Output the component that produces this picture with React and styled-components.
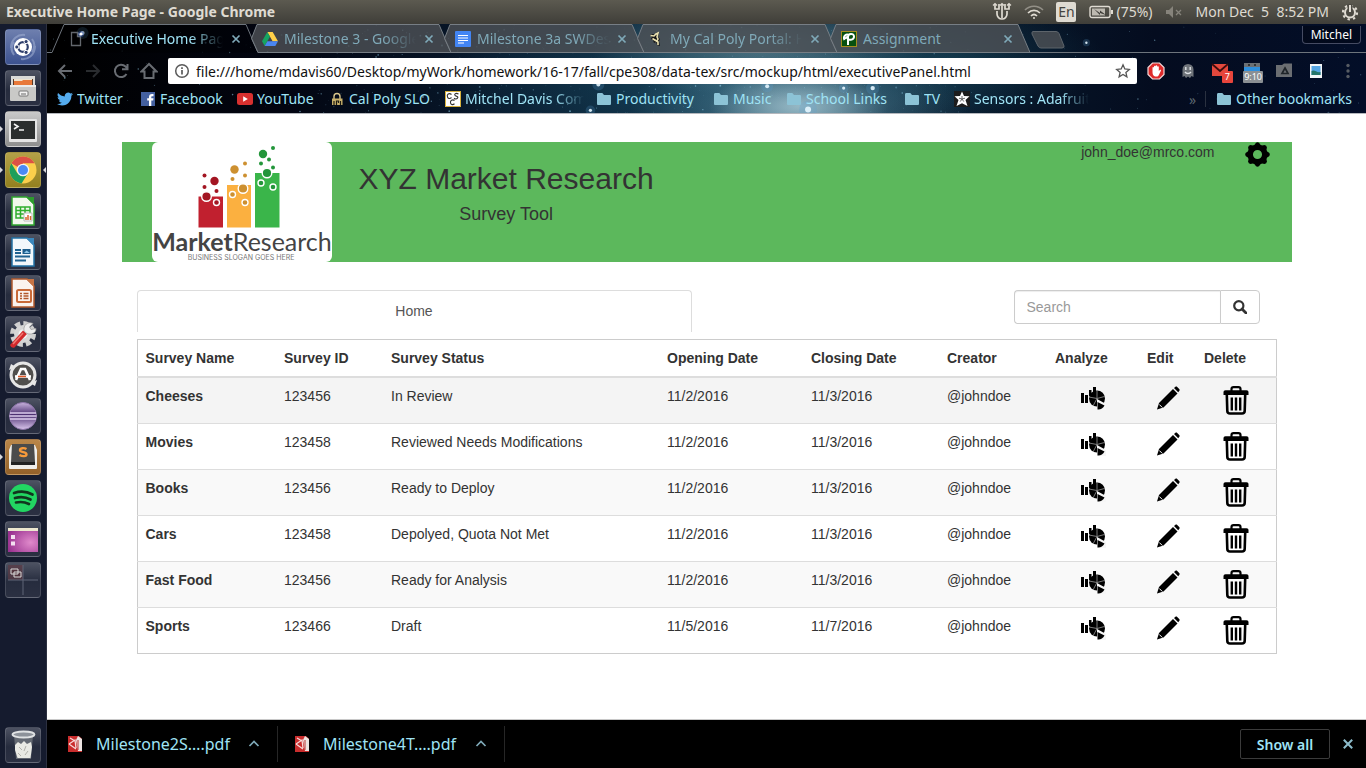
import React from "react";
import styled, { createGlobalStyle, css } from "styled-components";

const UI_FONT = '"Noto Sans", "Open Sans", sans-serif';
const PAGE_FONT = '"Liberation Sans", Arial, sans-serif';

const GlobalStyle = createGlobalStyle`
  * { box-sizing: border-box; }
  body { margin: 0; background: #fff; }
  button { font: inherit; color: inherit; background: none; border: 0; padding: 0; margin: 0; cursor: pointer; }
  a { color: inherit; text-decoration: none; }
  svg { display: block; flex: none; }
`;

/* ---------- shell ---------- */

const Desktop = styled.div`
  min-height: 100vh;
  display: flex;
  flex-direction: column;
  font-family: ${UI_FONT};
`;

const MenuBar = styled.header`
  display: flex;
  align-items: center;
  justify-content: space-between;
  height: 24px;
  padding: 0 7px 0 6px;
  background: linear-gradient(#5c5a50, #3f3e39);
  color: #dfdbd2;
  font-size: 14px;
  white-space: nowrap;
`;

const WindowTitle = styled.h1`
  margin: 0;
  font-size: 14px;
  line-height: 24px;
  font-weight: 700;
`;

const Indicators = styled.div`
  display: flex;
  align-items: center;
`;

const Indicator = styled.div`
  display: flex;
  align-items: center;
  gap: 3px;
  margin-left: ${(p) => p.$gap || 12}px;
  line-height: 24px;
`;

const LangBadge = styled.span`
  width: 20px;
  height: 20px;
  line-height: 20px;
  text-align: center;
  border-radius: 2px;
  background: #dfdbd2;
  color: #45443f;
`;

const Workspace = styled.div`
  flex: 1;
  display: flex;
`;

const Launcher = styled.nav`
  flex: none;
  width: 47px;
  display: flex;
  flex-direction: column;
  gap: 5px;
  padding: 5px;
  background: #151b2e;
  border-right: 1px solid #2c3040;
`;

const tileTones = {
  dash: "linear-gradient(#6e7fae, #3c5290)",
  grey: "linear-gradient(#c9c9c9, #8e8e8e)",
  gold: "linear-gradient(#b3a048, #93801f)",
  brown: "linear-gradient(#b98649, #93612a)",
  dark: "linear-gradient(#4d5262, #262c3e 55%, #2b3042)",
};

const LauncherTile = styled.button`
  position: relative;
  width: 36px;
  height: 36px;
  border-radius: 4px;
  border: 1px solid rgba(255, 255, 255, 0.14);
  background: ${(p) => tileTones[p.$tone || "dark"]};
  display: flex;
  align-items: center;
  justify-content: center;
  ${(p) => p.$last && css`margin-top: auto;`}
`;

const RunningMark = styled.span`
  position: absolute;
  top: 14px;
  ${(p) => (p.$side === "right" ? "right: -6px" : "left: -6px")};
  border: 3px solid transparent;
  ${(p) => (p.$side === "right" ? "border-right-color" : "border-left-color")}: #d8d8dc;
`;

const Browser = styled.div`
  flex: 1;
  min-width: 0;
  display: flex;
  flex-direction: column;
`;

/* ---------- browser chrome ---------- */

const ChromeTop = styled.div`
  position: relative;
  overflow: hidden;
  border-bottom: 1px solid #b5b8bd;
  color: #9fe3f5;
  font-size: 14px;
  white-space: nowrap;
  background:
    radial-gradient(ellipse 90px 34px at 57% 92%, rgba(175, 205, 215, 0.75), transparent),
    radial-gradient(ellipse 170px 60px at 57% 95%, rgba(100, 150, 170, 0.7), transparent),
    radial-gradient(ellipse 170px 50px at 54% 25%, rgba(105, 140, 150, 0.65), transparent),
    radial-gradient(ellipse 300px 100px at 52% 60%, rgba(30, 85, 110, 0.7), transparent),
    radial-gradient(ellipse 160px 60px at 68% 40%, rgba(22, 62, 80, 0.7), transparent),
    linear-gradient(90deg, #000 0%, #020511 18%, #08192c 34%, #0a2438 52%, #07182a 70%, #040c1f 84%, #030e28 100%);
`;

const StarField = styled.svg`
  position: absolute;
  inset: 0;
  width: 100%;
  height: 100%;
`;

const TabStrip = styled.div`
  position: relative;
  display: flex;
  height: 29px;
`;

const StripEdge = styled.div`
  width: 5px;
  border-bottom: 1px solid #6d747c;
`;

const StripRest = styled.div`
  flex: 1;
  display: flex;
  justify-content: space-between;
  align-items: flex-start;
  padding: 2px 5px 0 0;
  margin-left: 13px;
  border-bottom: 1px solid #6d747c;
`;

const Tab = styled.div`
  position: relative;
  flex: none;
  width: 206px;
  height: 29px;
  margin-right: -13px;
  display: flex;
  align-items: center;
  padding: 1px 17px 0 17px;
  color: ${(p) => (p.$active ? "#9fe3f5" : "#7fa9b8")};
`;

const TabShape = styled.svg`
  position: absolute;
  left: 0;
  top: 0;
`;

const TabLabel = styled.button`
  position: relative;
  flex: 1;
  min-width: 0;
  display: flex;
  align-items: center;
  gap: 6px;
  line-height: 24px;
`;

const FadeText = styled.span`
  flex: 1;
  overflow: hidden;
  text-align: left;
  ${(p) => p.$fade && css`mask-image: linear-gradient(90deg, #000 75%, transparent);`}
`;

const TabClose = styled.button`
  position: relative;
  margin-left: 8px;
`;

const ProfileButton = styled.button`
  position: relative;
  padding: 0 8px;
  height: 18px;
  line-height: 17px;
  font-size: 12px;
  color: #fff;
  border: 1px solid #454b62;
  border-top: 0;
  border-radius: 0 0 4px 4px;
  background: rgba(0, 0, 0, 0.25);
`;

const Toolbar = styled.div`
  position: relative;
  display: flex;
  align-items: center;
  padding: 5px 9px 2px 9px;
  gap: 10px;
`;

const NavButtons = styled.div`
  display: flex;
  gap: 10px;
`;

const NavButton = styled.button`
  width: 18px;
  height: 18px;
  opacity: ${(p) => (p.$dim ? 0.4 : 1)};
`;

const Omnibox = styled.div`
  flex: 1;
  min-width: 0;
  height: 26px;
  display: flex;
  align-items: center;
  gap: 6px;
  padding: 0 6px;
  border-radius: 2px;
  background: #fff;
`;

const UrlInput = styled.input`
  flex: 1;
  min-width: 0;
  height: 24px;
  border: 0;
  padding: 0;
  outline: 0;
  background: transparent;
  color: #111;
  font-family: ${UI_FONT};
  font-size: 14px;
`;

const Extensions = styled.div`
  display: flex;
  gap: 14px;
`;

const ExtButton = styled.button`
  position: relative;
  width: 18px;
  height: 18px;
`;

const ExtBadge = styled.span`
  position: absolute;
  top: 9px;
  right: ${(p) => (p.$wide ? -2 : -4)}px;
  padding: 0 ${(p) => (p.$wide ? 1 : 3)}px;
  height: 12px;
  font-size: 9px;
  line-height: 12px;
  color: #fff;
  border-radius: 1px;
  background: ${(p) => (p.$wide ? "#8b9094" : "#e8453c")};
`;

const BookmarkBar = styled.nav`
  position: relative;
  display: flex;
  align-items: center;
  height: 27px;
  padding: 0 14px 1px 10px;
`;

const Bookmark = styled.a`
  display: flex;
  align-items: center;
  gap: 4px;
  flex: 0 1 ${(p) => (p.$w ? `${p.$w}px` : "auto")};
  min-width: 0;
  padding-right: ${(p) => (p.$w ? 12 : 0)}px;
  line-height: 24px;
`;

const BookmarkOverflow = styled.button`
  margin-left: auto;
  padding-right: 9px;
  color: #5d6770;
`;

const BookmarkDivider = styled.span`
  height: 16px;
  border-left: 1px solid #2a3140;
  margin-right: 10px;
`;

/* ---------- page ---------- */

const PageView = styled.main`
  flex: 1;
  background: #fff;
  padding: 28px 16px;
  font-family: ${PAGE_FONT};
  font-size: 14px;
  line-height: 20px;
  color: #333;
`;

const Container = styled.div`
  max-width: 1170px;
  margin: 0 auto;
`;

const Banner = styled.header`
  display: flex;
  align-items: flex-start;
  min-height: 120px;
  padding: 0 22px 0 30px;
  background: #5cb85c;
`;

const Headline = styled.div`
  margin-left: 27px;
  padding-top: 20px;
  text-align: center;
`;

const CompanyName = styled.h2`
  margin: 0;
  font-size: 30px;
  line-height: 33px;
  font-weight: 400;
`;

const ToolName = styled.h3`
  margin: 9px 0 0;
  font-size: 18px;
  line-height: 20px;
  font-weight: 400;
`;

const Account = styled.div`
  margin-left: auto;
  display: flex;
  gap: 30px;
`;

const Controls = styled.div`
  display: flex;
  justify-content: space-between;
  align-items: flex-start;
  margin: 28px 32px 7px 15px;
`;

const HomeTab = styled.a`
  flex: 0 1 555px;
  height: 42px;
  padding-top: 10px;
  text-align: center;
  color: #555;
  border: 1px solid #ddd;
  border-bottom: 0;
  border-radius: 4px 4px 0 0;
`;

const SearchForm = styled.form`
  display: flex;
  height: 34px;
`;

const SearchInput = styled.input`
  width: 206px;
  padding: 6px 12px;
  font: 14px/20px ${PAGE_FONT};
  border: 1px solid #ccc;
  border-right: 0;
  border-radius: 4px 0 0 4px;
  box-shadow: inset 0 1px 1px rgba(0, 0, 0, 0.075);
  &::placeholder { color: #999; opacity: 1; }
`;

const SearchButton = styled.button`
  width: 40px;
  display: flex;
  align-items: center;
  justify-content: center;
  border: 1px solid #ccc;
  border-radius: 0 4px 4px 0;
`;

const TableWrap = styled.div`
  margin: 0 16px 0 15px;
`;

const SurveyTable = styled.table`
  width: 100%;
  table-layout: fixed;
  border-collapse: collapse;
  border: 1px solid #ccc;
`;

const Col = styled.col`
  width: ${(p) => p.$w}px;
`;

const HeadCell = styled.th`
  padding: 8px;
  text-align: left;
  border-bottom: 2px solid #ddd;
`;

const Row = styled.tr`
  background: ${(p) => (p.$hover ? "#f4f4f4" : p.$odd ? "#f9f9f9" : "#fff")};
`;

const Cell = styled.td`
  height: 46px;
  padding: 8px;
  text-align: left;
  vertical-align: top;
  border-top: 1px solid #ddd;
`;

const ActionCell = styled(Cell)`
  text-align: center;
  line-height: 0;
`;

const ActionButton = styled.button`
  display: inline-block;
`;

/* ---------- downloads ---------- */

const DownloadBar = styled.footer`
  display: flex;
  align-items: center;
  height: 49px;
  padding-right: 12px;
  border-top: 1px solid #c8c8c8;
  background: #000;
  color: #9fe3f5;
  font-size: 16px;
`;

const Download = styled.div`
  display: flex;
  align-items: center;
  height: 36px;
  padding: 0 17px 0 20px;
  border-right: 1px solid #262626;
  & + & { padding-left: 16px; }
`;

const DownloadName = styled.button`
  display: flex;
  align-items: center;
  gap: 12px;
  width: 164px;
  white-space: nowrap;
`;

const DownloadMenu = styled.button`
  margin-left: 17px;
`;

const ShowAll = styled.button`
  margin-left: auto;
  margin-right: 12px;
  width: 90px;
  height: 30px;
  font-size: 14px;
  font-weight: 600;
  border: 1px solid #3b3b3b;
  border-radius: 2px;
`;

/* ---------- drawings ---------- */

const CloseGlyph = ({ size = 10, color = "#7fa9b8" }) => (
  <svg width={size} height={size} viewBox="0 0 10 10">
    <path d="M1.500 1.500l7 7M8.500 1.500l-7 7" stroke={color} strokeWidth="1.700" />
  </svg>
);

function makeStars(count) {
  let seed = 41;
  const next = () => {
    seed = (seed * 16807) % 2147483647;
    return seed / 2147483647;
  };
  return Array.from({ length: count }, () => {
    const spread = next();
    const x = spread < 0.65 ? 20 + next() * 50 : next() * 100;
    return { x, y: next() * 100, r: 0.3 + next() * next() * 0.8, o: 0.2 + next() * 0.5 };
  });
}
const STARS = makeStars(520);
const BRIGHT = [[2.7, 10, 2], [41.2, 97, 1.6], [41.8, 68, 2], [60.4, 72, 1.6], [78.8, 21, 1.2], [57.7, 96, 3], [62.6, 72, 2.2], [54.600, 70, 2]];

const Stars = () => (
  <StarField aria-hidden="true">
    {STARS.map((s, i) => (
      <circle key={i} cx={`${s.x}%`} cy={`${s.y}%`} r={s.r} fill="#8ec9e4" opacity={s.o} />
    ))}
    {BRIGHT.map(([x, y, r], i) => (
      <g key={i}>
        <circle cx={`${x}%`} cy={`${y}%`} r={r * 3} fill="#5aa0d0" opacity=".22" />
        <circle cx={`${x}%`} cy={`${y}%`} r={r} fill="#e6f6ff" opacity=".9" />
      </g>
    ))}
  </StarField>
);

const favicons = {
  page: (
    <svg width="16" height="16" viewBox="0 0 16 16">
      <path d="M2.500 1.500h6l3 3.500v9.500h-9z M8.500 1.500v4h3" fill="none" stroke="#63676d" strokeWidth="1.300" />
      <circle cx="12" cy="3" r="3" fill="#3f74e8" opacity=".35" />
      <circle cx="12" cy="3" r="1.600" fill="#fff" />
    </svg>
  ),
  drive: (
    <svg width="16" height="16" viewBox="0 0 16 16">
      <path d="M5.300 1h5.400L16 10.200h-5.400z" fill="#ffcf48" />
      <path d="M5.300 1L8 5.600 2.700 15 0 10.200z" fill="#16a362" />
      <path d="M5.400 10.200H16L13.300 15H2.700z" fill="#4a86f0" />
    </svg>
  ),
  docs: (
    <svg width="16" height="16" viewBox="0 0 16 16">
      <rect width="16" height="16" rx="1" fill="#4285f4" />
      <path d="M3 4.500h10M3 7h10M3 9.500h10M3 12h6" stroke="#fff" strokeWidth="1.200" />
    </svg>
  ),
  mustang: (
    <svg width="16" height="16" viewBox="0 0 16 16">
      <path d="M2 4l3-1 2 1 2-3 2 2-1 3 2 2-1 2 1 5-3-1-1-3-2 1-1-3-2-1 1-2z" fill="#141414" />
      <path d="M2.500 4.500l3.500 .5 2-2 2-1-1 4 1 2-1 2M7 9l3 2 0 3M4.500 7.500l3 2" stroke="#e8dfae" strokeWidth="1.600" fill="none" />
    </svg>
  ),
  polylearn: (
    <svg width="16" height="16" viewBox="0 0 16 16">
      <rect x=".5" y=".5" width="15" height="15" fill="#07500f" stroke="#a58c1d" />
      <path d="M3.500 9C1.500 5 6 2 8 4.500M7 14V6c0-4 6-4 6-.5S8.500 9.500 7 8M4.500 8c.5-2 2-2.500 3-2" fill="none" stroke="#fff" strokeWidth="2" />
    </svg>
  ),
  twitter: (
    <svg width="16" height="16" viewBox="0 0 24 24">
      <path fill="#55acee" d="M23.950 4.570a10 10 0 0 1-2.820.775 4.960 4.960 0 0 0 2.160-2.720c-.95.555-2.005.96-3.130 1.185a4.920 4.920 0 0 0-8.380 4.480C7.690 8.090 4.070 6.130 1.640 3.160a4.900 4.900 0 0 0 1.520 6.570 4.900 4.900 0 0 1-2.230-.61v.06a4.920 4.920 0 0 0 3.950 4.830 5 5 0 0 1-2.210.085 4.940 4.940 0 0 0 4.600 3.420A9.870 9.870 0 0 1 0 19.540a13.990 13.990 0 0 0 7.550 2.210c9.050 0 14-7.500 14-13.980 0-.21 0-.42-.015-.63a9.940 9.940 0 0 0 2.460-2.550z" />
    </svg>
  ),
  facebook: (
    <svg width="16" height="16" viewBox="0 0 16 16">
      <rect x="1" y="1" width="14" height="14" fill="#4460a0" />
      <path d="M9 15V9.500H7.200V7.300H9V6c0-2 1-3 3-3h1.500v2.200h-1.200c-.8 0-1 .4-1 1v1.100h2.200l-.3 2.200h-1.900V15z" fill="#fff" />
    </svg>
  ),
  youtube: (
    <svg width="16" height="16" viewBox="0 0 16 16">
      <rect x="0" y="2" width="16" height="12" rx="2.500" fill="#d8302f" />
      <path d="M6.200 5.300l4.600 2.700-4.600 2.700z" fill="#fff" />
    </svg>
  ),
  lock: (
    <svg width="16" height="16" viewBox="0 0 16 16">
      <path d="M5 8V5.500a3 3 0 0 1 6 0V8" fill="none" stroke="#d9c68c" strokeWidth="1.400" />
      <path d="M3 7.500h10.500V14H3z" fill="#c8b06a" />
      <path d="M5 14v-4M7.500 14v-4h2v2M11.500 10v4" fill="none" stroke="#1d1a10" strokeWidth="1.200" />
    </svg>
  ),
  csc: (
    <svg width="16" height="16" viewBox="0 0 16 16">
      <rect x=".5" y=".5" width="15" height="15" fill="#fff" stroke="#d9b23c" />
      <path d="M6.500 3.500C4 1.500 1.500 3.500 2.500 6S5.500 7.500 6.500 6.500M13.500 3c-3-1.500-5 .5-3 1.700s3 1.300 2 2.500-2.500.8-3.500 0M9.500 9.500c-2-1.500-4.500 0-4 2.300s2.500 2.200 4 1" fill="none" stroke="#333" strokeWidth="1.100" />
    </svg>
  ),
  folder: (
    <svg width="16" height="16" viewBox="0 0 16 16">
      <path d="M1 3.500C1 2.700 1.500 2 2.300 2h4l1.700 2h5.700c.8 0 1.300.5 1.300 1.300v7.400c0 .8-.5 1.300-1.300 1.300H2.300C1.500 14 1 13.500 1 12.700z" fill="#8cc3d6" />
    </svg>
  ),
  adafruit: (
    <svg width="16" height="16" viewBox="0 0 16 16">
      <rect width="16" height="16" fill="#1c1c1c" />
      <path d="M8 .5l2 4.500 5.500.2-4 3.800 2 6L8 12.200 2.500 15l2-6-4-3.800L6 5z" fill="#fff" />
      <path d="M8 8V5M8 8l3-.8M8 8l1.800 2.600M8 8l-1.800 2.600M8 8l-3-.8" stroke="#444" strokeWidth=".8" />
    </svg>
  ),
};

const launcherArt = {
  dash: (
    <svg width="34" height="34" viewBox="0 0 34 34">
      <path d="M5 18C5 9 12 4 19 5M29 16c0 9-7 14-14 13M8 25c-3-4-3-9 0-13M26 9c3 4 3 9 0 13" stroke="#a4b2d6" strokeWidth="2" fill="none" opacity=".55" />
      <circle cx="17" cy="17" r="9" fill="#fff" />
      <circle cx="17" cy="17" r="4.800" fill="none" stroke="#2f3f6c" strokeWidth="2.200" />
      <g fill="#2f3f6c" stroke="#fff" strokeWidth="1">
        <circle cx="10.800" cy="17" r="2.100" /><circle cx="20.100" cy="11.600" r="2.100" /><circle cx="20.100" cy="22.400" r="2.100" />
      </g>
    </svg>
  ),
  files: (
    <svg width="34" height="34" viewBox="0 0 34 34">
      <path d="M5 5h24v12H5z" fill="#d9d9d7" /><path d="M7 8h20v7H7z" fill="#5b3a26" />
      <path d="M8 8h18v2H8z" fill="#efe3cf" /><path d="M8 10h8l1-1h9v6H8z" fill="#e8793a" />
      <rect x="4" y="14" width="26" height="16" rx="1" fill="#c9c9c7" /><path d="M4 14h26v2H4z" fill="#ececea" />
      <rect x="13" y="20" width="9" height="5" rx="1" fill="#f2f2f2" stroke="#777" /><path d="M15 23h5" stroke="#666" />
    </svg>
  ),
  terminal: (
    <svg width="34" height="34" viewBox="0 0 34 34">
      <rect x="3" y="7" width="28" height="23" rx="1" fill="#e4e4e4" /><rect x="5" y="9" width="24" height="18" fill="#2b2e2e" />
      <path d="M8 12l4 2.500L8 17M13 18h5" stroke="#f2f2f2" strokeWidth="1.600" fill="none" />
    </svg>
  ),
  chrome: (
    <svg width="34" height="34" viewBox="0 0 34 34">
      <circle cx="17" cy="17" r="13.500" fill="#fbcf4b" />
      <path d="M17 17L5.300 10.250A13.500 13.500 0 0 1 28.700 10.250H17z" fill="#dd5145" />
      <path d="M5.300 10.250A13.500 13.500 0 0 0 15.500 30.400L21.500 21 11.500 20.500z" fill="#1d9f5c" />
      <circle cx="17" cy="17" r="6.300" fill="#f3f3f3" /><circle cx="17" cy="17" r="5" fill="#4a8af4" />
    </svg>
  ),
  calc: (
    <svg width="34" height="34" viewBox="0 0 34 34">
      <path d="M6 3h15l7 7v21H6z" fill="#f2f8ee" stroke="#2fa52f" strokeWidth="1.500" /><path d="M20 3h8v8z" fill="#2d9c2d" />
      <path d="M10 13h14v11H10z M10 16.500h14M10 20h14M14.500 13v11M19 13v11" fill="none" stroke="#2fae2f" strokeWidth="1.500" />
      <path d="M18 19h8v8h-8z" fill="#fff" stroke="#bbb" /><path d="M20 26v-3M22 26v-5M24.500 26v-4" stroke="#d8602a" strokeWidth="1.500" />
    </svg>
  ),
  writer: (
    <svg width="34" height="34" viewBox="0 0 34 34">
      <path d="M6 3h15l7 7v21H6z" fill="#f2f7fb" stroke="#2272a5" strokeWidth="1.500" /><path d="M20 3h8v8z" fill="#3b87bd" />
      <path d="M9 15h6M9 18h6M9 21.500h15M9 25.500h11" stroke="#1f6290" strokeWidth="2" /><path d="M16.500 14h8v5h-8z" fill="#1d5d8c" /><path d="M18 18l2.500-2.500L24 18z" fill="#8cc5e8" />
    </svg>
  ),
  impress: (
    <svg width="34" height="34" viewBox="0 0 34 34">
      <path d="M6 3h15l7 7v21H6z" fill="#fbf3ee" stroke="#b2592c" strokeWidth="1.500" /><path d="M20 3h8v8z" fill="#c77445" />
      <rect x="11" y="14" width="14" height="12" rx="1.500" fill="none" stroke="#c96a38" strokeWidth="2" />
      <path d="M14 17.500h2M14 20h2M14 22.500h2M17.500 17.500h5M17.500 20h5M17.500 22.500h5" stroke="#b2592c" strokeWidth="1.300" />
    </svg>
  ),
  settings: (
    <svg width="34" height="34" viewBox="0 0 34 34">
      <circle cx="17" cy="17" r="10.500" fill="none" stroke="#cfcfcf" strokeWidth="5" strokeDasharray="5.200 3.050" />
      <circle cx="17" cy="17" r="9" fill="#d6d6d6" /><circle cx="17" cy="17" r="4.500" fill="#f3f3f3" />
      <path d="M4 28q1 3.500 4.500 2.500L21 17l-4-3.500z" fill="#d2292c" /><path d="M7 27l10-11" stroke="#f07a72" strokeWidth="1.500" />
      <path d="M18 14c-1-6 4-10 9-7.500l-3.500 3.500 1.500 2.500 5-1c0 5-5 6.500-9 5z" fill="#ededed" stroke="#999" strokeWidth=".7" />
    </svg>
  ),
  updater: (
    <svg width="34" height="34" viewBox="0 0 34 34">
      <circle cx="17" cy="17" r="12" fill="#504f4d" stroke="#e6e6e6" strokeWidth="3" />
      <path d="M3 12l2-6 5 3zM31 22l-2 6-5-3z" fill="#e6e6e6" />
      <path d="M10 22l5-11h4l5 11" stroke="#fff" strokeWidth="2.600" fill="none" /><path d="M9 18.500h16" stroke="#fff" strokeWidth="2.600" /><path d="M12 18.500h8" stroke="#e05b2a" strokeWidth="1.500" />
    </svg>
  ),
  eclipse: (
    <svg width="34" height="34" viewBox="0 0 34 34">
      <defs><linearGradient id="ecl" x1="0" y1="0" x2="0" y2="1"><stop offset="0" stopColor="#c9b4de" /><stop offset=".45" stopColor="#4b2f70" /><stop offset="1" stopColor="#d9c6ec" /></linearGradient></defs>
      <circle cx="17" cy="17" r="13.500" fill="url(#ecl)" stroke="#8d75a9" />
      <path d="M4 14h26M3.500 17h27M4 20h26" stroke="#dccced" strokeWidth="1.300" />
    </svg>
  ),
  sublime: (
    <svg width="34" height="34" viewBox="0 0 34 34">
      <path d="M3 10l2-5h24l2 5v18q0 1-1 1H4q-1 0-1-1z" fill="#f0eeea" /><path d="M6 4h22l1 18H5z" fill="#4b4b4b" /><path d="M5 22h24v3H5z" fill="#222" />
      <path d="M20.500 9c-2.500-1.500-6.500-1-6.500 1.200s6.500 1.600 6.500 4-4 2.500-7 .8" stroke="#f79a3b" strokeWidth="2.400" fill="none" />
    </svg>
  ),
  spotify: (
    <svg width="34" height="34" viewBox="0 0 34 34">
      <circle cx="17" cy="17" r="14" fill="#22d662" />
      <path d="M8 12c6-2 13-1.500 18.500 1.500M9 17c5-1.500 11-1 15.500 1.500M10 21.500c4.500-1 9-.5 13 1.500" stroke="#12361f" strokeWidth="2.700" fill="none" strokeLinecap="round" />
    </svg>
  ),
  workspace: (
    <svg width="34" height="34" viewBox="0 0 34 34">
      <defs><radialGradient id="wsp" cx=".75" cy=".6" r=".8"><stop offset="0" stopColor="#e08acb" /><stop offset="1" stopColor="#98308f" /></radialGradient></defs>
      <rect x="2" y="6" width="30" height="24" fill="url(#wsp)" /><path d="M2 6h30v3H2z" fill="#ece7cf" />
      <path d="M5 13h4v4H5zM5 19.500h4v4H5z" fill="#f3dff0" />
    </svg>
  ),
  switcher: (
    <svg width="34" height="34" viewBox="0 0 34 34">
      <path d="M2 2h15v15H2z" fill="#5d3a45" opacity=".7" /><path d="M17 2v30M2 17h30" stroke="#5f6576" />
      <path d="M5 6h7v5H5zM8 9h7v5H8z" fill="#53343e" stroke="#dadada" />
    </svg>
  ),
  trash: (
    <svg width="34" height="34" viewBox="0 0 34 34">
      <path d="M8 7h19l-2 24H10z" fill="#70757d" opacity=".8" />
      <path d="M9 17l3-3 3 2 3-3 3 3 4-2 1 5-1.500 11h-13L9 22z" fill="#e9e9e4" />
      <path d="M13 19l3 3M20 18l-2 5M22 23l-3 4M12 25l3 3" stroke="#b1b1ab" />
      <ellipse cx="17.500" cy="6.500" rx="11" ry="3" fill="#8d929a" stroke="#e0e2e4" strokeWidth="1.800" />
    </svg>
  ),
};

const LAUNCHER = [
  ["dash", "Dash", "dash"],
  ["files", "Files"],
  ["terminal", "Terminal", "grey", "left"],
  ["chrome", "Google Chrome", "gold", "both"],
  ["calc", "LibreOffice Calc"],
  ["writer", "LibreOffice Writer"],
  ["impress", "LibreOffice Impress"],
  ["settings", "System Settings"],
  ["updater", "Software Updater"],
  ["eclipse", "Eclipse"],
  ["sublime", "Sublime Text", "brown", "left"],
  ["spotify", "Spotify"],
  ["workspace", "Desktop"],
  ["switcher", "Workspace Switcher"],
  ["trash", "Trash"],
];

const TABS = [
  ["page", "Executive Home Page"],
  ["drive", "Milestone 3 - Google Drive"],
  ["docs", "Milestone 3a SWDesign"],
  ["mustang", "My Cal Poly Portal: Home"],
  ["polylearn", "Assignment"],
];

const BOOKMARKS = [
  ["twitter", "Twitter", 83],
  ["facebook", "Facebook", 97],
  ["youtube", "YouTube", 92],
  ["lock", "Cal Poly SLO", 116],
  ["csc", "Mitchel Davis Computer", 151, true],
  ["folder", "Productivity", 117],
  ["folder", "Music", 73],
  ["folder", "School Links", 118],
  ["folder", "TV", 50],
  ["adafruit", "Sensors : Adafruit Industries", 147, true],
];

const navGlyphs = [
  ["Back", <path d="M16 9H3M9 3L3 9l6 6" />],
  ["Forward", <path d="M2 9h13M9 3l6 6-6 6" />, true],
  ["Reload", <path d="M14.500 12A6.200 6.200 0 1 1 13.500 4.500L15 6M15.500 2v5.200H10" />],
  ["Home page", <path d="M1.500 9.500L9 2l7.500 7.500H13.500v6.500h-9V9.500z" />],
];

const extGlyphs = [
  ["AdBlock", (
    <svg width="18" height="18" viewBox="0 0 18 18">
      <path d="M5.500 1h7L17 5.500v7L12.500 17h-7L1 12.500v-7z" fill="#df2b2b" stroke="#f4dada" strokeWidth="1.200" />
      <path d="M5.500 9V5.500a.8.8 0 0 1 1.500 0V4.500a.8.8 0 0 1 1.600 0V4a.8.800 0 0 1 1.600 0v1a.8.8 0 0 1 1.600 0v4l1-1c.8-.5 1.500.2 1 1l-2 4c-.5 1-1 1.500-2.500 1.500-2.800 0-3.800-1.500-3.800-5z" fill="#fff" />
    </svg>
  )],
  ["Ghostery", (
    <svg width="18" height="18" viewBox="0 0 18 18">
      <path d="M3.500 15V7.500a5.500 5.500 0 0 1 11 0V15l-2-1-1.500 2-2-1.500L7 16l-1.500-2z" fill="#6f747a" />
      <path d="M6.800 5v3M11.200 5v3M6 10c1.500 2 4.500 2 6 0" stroke="#dfe3e6" strokeWidth="1.400" fill="none" />
    </svg>
  )],
  ["Mail", (
    <svg width="18" height="18" viewBox="0 0 18 18">
      <rect x="1" y="2" width="16" height="12" fill="#e2483d" /><path d="M1 2l8 7 8-7" stroke="#3a0b0b" strokeWidth="1.700" fill="none" />
    </svg>
  ), "7"],
  ["Clock", (
    <svg width="18" height="18" viewBox="0 0 18 18">
      <path d="M1 1h16v4H1z" fill="#6b7075" /><path d="M5 3h2M11 3h2" stroke="#222" strokeWidth="1.500" /><path d="M1 5h16v5H1z" fill="#2f8fdc" />
    </svg>
  ), "9:10"],
  ["Save to Drive", (
    <svg width="18" height="18" viewBox="0 0 18 18">
      <path d="M1 3h6l2-1.500h8V15H1z" fill="#6b6e72" /><path d="M10 6l3 5.500H7z" fill="none" stroke="#1f2429" strokeWidth="1.700" />
    </svg>
  )],
  ["Photos", (
    <svg width="18" height="18" viewBox="0 0 18 18">
      <rect x="3" y="2" width="12" height="14" fill="#f4f6f7" /><rect x="4.500" y="4" width="9" height="9" fill="#56a6e4" /><path d="M4.500 9c3-2 5 2 9 1v3h-9z" fill="#26766a" />
    </svg>
  )],
  ["Menu", (
    <svg width="18" height="18" viewBox="0 0 18 18">
      <g fill="#575c63"><circle cx="9" cy="3.500" r="1.700" /><circle cx="9" cy="9" r="1.700" /><circle cx="9" cy="14.500" r="1.700" /></g>
    </svg>
  )],
];

const SURVEYS = [
  ["Cheeses", "123456", "In Review", "11/2/2016", "11/3/2016"],
  ["Movies", "123458", "Reviewed Needs Modifications", "11/2/2016", "11/3/2016"],
  ["Books", "123456", "Ready to Deploy", "11/2/2016", "11/3/2016"],
  ["Cars", "123458", "Depolyed, Quota Not Met", "11/2/2016", "11/3/2016"],
  ["Fast Food", "123456", "Ready for Analysis", "11/2/2016", "11/3/2016"],
  ["Sports", "123466", "Draft", "11/5/2016", "11/7/2016"],
];
const COLUMNS = [
  ["Survey Name", 139], ["Survey ID", 107], ["Survey Status", 276], ["Opening Date", 144], ["Closing Date", 136],
  ["Creator", 108], ["Analyze", 92], ["Edit", 57], ["Delete", 80],
];

const AnalyzeIcon = () => (
  <svg width="26" height="25" viewBox="0 0 26 25">
    <path d="M1 7h3v10H1zM5 9h3v8H5zM9 4h2.500v6H9zM13 1h3v5h-3z" />
    <circle cx="17" cy="12.500" r="8" />
    <path d="M17 12.500V4.500M17 12.500L24.500 10.500M17 12.500l-8-1.500M17 12.500l-4 7.500" stroke="#999" strokeWidth=".8" />
    <path d="M17 13l9 5v6h-9z" fill="#f6f6f6" />
    <path d="M17.500 16l7 3.500c-1.500 3-4 4.300-7 4z" />
  </svg>
);

const PencilIcon = () => (
  <svg width="24" height="25" viewBox="0 0 24 25">
    <path d="M1 23.500l2-6.500L17 3l4.500 4.500-14 14z" />
    <path d="M18 2l1.200-1c.8-.6 1.500-.5 2 0l2 2c.6.600.6 1.400 0 2l-1 1.200z" />
    <path d="M3.300 18.500l3 3" stroke="#fff" strokeWidth="1" />
  </svg>
);

const TrashIcon = () => (
  <svg width="26" height="29" viewBox="0 0 26 29" fill="none" stroke="#000">
    <path d="M8.500 5V3C8.500 1.500 9.200 1.200 10.500 1.200h5c1.300 0 2 .3 2 1.800V5" strokeWidth="2.200" />
    <path d="M.5 9V6.500C.5 5 1.200 4.300 2.500 4.300h21c1.300 0 2 .7 2 2.200V9z" fill="#000" stroke="none" />
    <path d="M3.800 8.500l.5 16.500c.1 1.800.9 2.500 2.700 2.500h12c1.800 0 2.600-.7 2.700-2.500l.5-16.500" strokeWidth="2.600" />
    <path d="M8.800 11.500v13M13 11.500v13M17.200 11.500v13" strokeWidth="2.400" />
  </svg>
);

const GearIcon = () => (
  <svg width="25" height="25" viewBox="0 0 25 25">
    <circle cx="12.500" cy="12.500" r="7.300" fill="none" stroke="#000" strokeWidth="5.500" />
    {[0, 45, 90, 135, 180, 225, 270, 315].map((a) => (
      <path key={a} d="M8.700 4L10.800.900Q12.500-.500 14.200.900L16.300 4z" transform={`rotate(${a} 12.500 12.500)`} />
    ))}
  </svg>
);

const Bubbles = ({ color, dots }) =>
  dots.map(([x, y, r, ring], i) => (
    <circle key={i} cx={x} cy={y} r={r} fill={color} stroke={ring ? "#fff" : "none"} strokeWidth="1.400" />
  ));

const Logo = () => (
  <svg width="180" height="120" viewBox="0 0 180 120" role="img" aria-label="MarketResearch">
    <rect width="180" height="120" rx="6" fill="#fff" />
    <path d="M46.500 54.500h24.500v31H46.500z" fill="#c1202f" />
    <path d="M75 43h24v42.500H75z" fill="#fbb040" />
    <path d="M103 31h24.500v54.500H103z" fill="#3ab54a" />
    <Bubbles color="#a31522" dots={[[52.500, 33.500, 2], [62.500, 39, 4.200], [52.500, 45, 2], [64.500, 49, 2], [54.500, 54.500, 4.800, 1], [64.500, 60.500, 3, 1]]} />
    <Bubbles color="#cd9030" dots={[[93, 21.500, 2], [82.500, 27.500, 4.200], [93, 33.500, 2], [80.500, 37, 2], [91, 46.500, 4.800, 1], [80.500, 52.500, 3, 1], [93, 60.500, 3, 1]]} />
    <Bubbles color="#23963a" dots={[[121, 6, 2], [111, 12, 4.200], [117, 17.500, 2], [109, 21.500, 2], [121, 25.500, 2], [115, 31, 4.800, 1], [109, 41, 3, 1], [121, 45, 3, 1]]} />
    <text x="90" y="109" textAnchor="middle" fontFamily="Lato, sans-serif" fontSize="25" fill="#444">
      <tspan fontWeight="700">Market</tspan><tspan>Research</tspan>
    </text>
    <text x="89" y="118" textAnchor="middle" fontFamily="Inter, sans-serif" fontSize="7" fill="#777">BUSINESS SLOGAN GOES HERE</text>
  </svg>
);

const PdfIcon = () => (
  <svg width="17" height="18" viewBox="0 0 17 18">
    <path d="M1 1h11l3 3v13H1z" fill="#c92d2d" /><path d="M2 9l6-4 1 8M2 9l7 5M3 3l5 3" stroke="#f6dada" strokeWidth="1.300" fill="none" />
    <path d="M9 5l2-4 4 3v12h-4z" fill="#ece4e2" /><path d="M11 5v10" stroke="#b33" />
  </svg>
);

const Chevron = () => (
  <svg width="12" height="12" viewBox="0 0 12 12"><path d="M1.500 8L6 3.500 10.500 8" stroke="#7fa9b8" strokeWidth="1.700" fill="none" /></svg>
);

/* ---------- sections ---------- */

const SystemBar = () => (
  <MenuBar>
    <WindowTitle>Executive Home Page - Google Chrome</WindowTitle>
    <Indicators>
      <Indicator>
        <svg width="20" height="20" viewBox="0 0 20 20" fill="none" stroke="#dfdbd2" strokeWidth="1.700">
          <path d="M10 2v14M5 9v3a5 5 0 0 0 10 0V9M3 2v5h4V2M13 2v5h4V2" /><path d="M1 3.500l2-2 2 2M8 3.500l2-2 2 2M15 3.500l2-2 2 2" strokeWidth="1.200" />
        </svg>
      </Indicator>
      <Indicator>
        <svg width="20" height="16" viewBox="0 0 20 16" fill="none" stroke="#dfdbd2" strokeWidth="1.700">
          <path d="M1 6c5-5 13-5 18 0" opacity=".45" /><path d="M4 9c3.500-3.500 8.500-3.500 12 0M7 12c2-2 4-2 6 0" /><circle cx="10" cy="14" r="1" fill="#dfdbd2" stroke="none" />
        </svg>
      </Indicator>
      <Indicator><LangBadge>En</LangBadge></Indicator>
      <Indicator $gap={13}>
        <svg width="24" height="14" viewBox="0 0 24 14">
          <rect x="1" y="1.500" width="20" height="11" rx="2" fill="none" stroke="#dfdbd2" strokeWidth="1.400" /><path d="M22 5h2v4h-2z" fill="#dfdbd2" />
          <path d="M3 3.500h13v7H3z" fill="#bdb9b0" /><path d="M5 4l6 4V5.500l6 4.500-6-2v2z" fill="#3f3e39" />
        </svg>
        (75%)
      </Indicator>
      <Indicator>
        <svg width="18" height="14" viewBox="0 0 18 14"><path d="M1 5h3l4-4v12L4 9H1z" fill="#86837b" /><path d="M11 5l5 5M16 5l-5 5" stroke="#86837b" strokeWidth="1.300" /></svg>
      </Indicator>
      <Indicator $gap={13}>Mon Dec&nbsp; 5&nbsp; 8:52 PM</Indicator>
      <Indicator>
        <svg width="18" height="18" viewBox="0 0 18 18" fill="none" stroke="#dfdbd2">
          <circle cx="9" cy="9.500" r="5" strokeWidth="2" /><circle cx="9" cy="9.500" r="7" strokeWidth="2.200" strokeDasharray="2.400 3.100" />
          <path d="M9 1v9" stroke="#4d4b44" strokeWidth="5" /><path d="M9 2v7" strokeWidth="2" />
        </svg>
      </Indicator>
    </Indicators>
  </MenuBar>
);

const Sidebar = () => (
  <Launcher aria-label="Launcher">
    {LAUNCHER.map(([id, label, tone, mark], i) => (
      <LauncherTile key={id} aria-label={label} $tone={tone} $last={i === LAUNCHER.length - 1}>
        {launcherArt[id]}
        {mark && <RunningMark $side="left" />}
        {mark === "both" && <RunningMark $side="right" />}
      </LauncherTile>
    ))}
  </Launcher>
);

const BrowserChrome = () => (
  <ChromeTop>
    <Stars />
    <TabStrip>
      <StripEdge />
      {TABS.map(([icon, title], i) => (
        <Tab key={title} $active={i === 0}>
          <TabShape width="206" height="29" viewBox="0 0 206 29">
            {i === 0 ? (
              <path d="M0 28.500L12 .5H194L206 28.500" fill="rgba(0,0,0,.3)" stroke="#6d747c" />
            ) : (
              <path d="M6.500 14.500L12 .5H194L206 28.500H13z" fill="rgba(77,81,86,.82)" stroke="#777e85" />
            )}
          </TabShape>
          <TabLabel>
            {favicons[icon]}
            <FadeText $fade={title !== "Assignment"}>{title}</FadeText>
          </TabLabel>
          <TabClose aria-label={`Close ${title}`}><CloseGlyph /></TabClose>
        </Tab>
      ))}
      <StripRest>
        <button aria-label="New tab">
          <svg width="36" height="26" viewBox="0 0 36 26"><path d="M3 5.500h23q2 0 3 2L34 20q.5 2-2 2H11q-2 0-3-2L2 8q-.5-2.500 1-2.500z" fill="rgba(77,81,86,.82)" stroke="#5d646b" /></svg>
        </button>
        <ProfileButton>Mitchel</ProfileButton>
      </StripRest>
    </TabStrip>
    <Toolbar>
      <NavButtons>
        {navGlyphs.map(([label, shape, dim]) => (
          <NavButton key={label} aria-label={label} $dim={dim}>
            <svg width="18" height="18" viewBox="0 0 18 18" fill="none" stroke="#686c72" strokeWidth="2">{shape}</svg>
          </NavButton>
        ))}
      </NavButtons>
      <Omnibox>
        <svg width="16" height="16" viewBox="0 0 16 16" fill="none" stroke="#5a5a5a" strokeWidth="1.500">
          <circle cx="8" cy="8" r="6.300" /><path d="M8 7v4.500M8 4.300v1.600" strokeWidth="1.700" />
        </svg>
        <UrlInput
          aria-label="Address"
          defaultValue="file:///home/mdavis60/Desktop/myWork/homework/16-17/fall/cpe308/data-tex/src/mockup/html/executivePanel.html"
        />
        <button aria-label="Bookmark this page">
          <svg width="16" height="16" viewBox="0 0 16 16"><path d="M8 1.800l1.800 4.200 4.500.4-3.400 3 1 4.400L8 11.500l-3.900 2.300 1-4.400-3.400-3 4.500-.4z" fill="none" stroke="#555" strokeWidth="1.300" /></svg>
        </button>
      </Omnibox>
      <Extensions>
        {extGlyphs.map(([label, art, badge]) => (
          <ExtButton key={label} aria-label={label}>
            {art}
            {badge && <ExtBadge $wide={badge.length > 1}>{badge}</ExtBadge>}
          </ExtButton>
        ))}
      </Extensions>
    </Toolbar>
    <BookmarkBar aria-label="Bookmarks">
      {BOOKMARKS.map(([icon, label, w, fade]) => (
        <Bookmark key={label} href="#" $w={w}>
          {favicons[icon]}
          <FadeText $fade={fade}>{label}</FadeText>
        </Bookmark>
      ))}
      <BookmarkOverflow aria-label="More bookmarks">»</BookmarkOverflow>
      <BookmarkDivider />
      <Bookmark href="#">{favicons.folder}<span>Other bookmarks</span></Bookmark>
    </BookmarkBar>
  </ChromeTop>
);

const SurveyPage = () => (
  <PageView>
    <Container>
      <Banner>
        <Logo />
        <Headline>
          <CompanyName>XYZ Market Research</CompanyName>
          <ToolName>Survey Tool</ToolName>
        </Headline>
        <Account>
          <span>john_doe@mrco.com</span>
          <button aria-label="Settings"><GearIcon /></button>
        </Account>
      </Banner>
      <Controls>
        <HomeTab href="#">Home</HomeTab>
        <SearchForm role="search">
          <SearchInput type="text" placeholder="Search" aria-label="Search" />
          <SearchButton type="button" aria-label="Search">
            <svg width="14" height="14" viewBox="0 0 14 14" fill="none" stroke="#333"><circle cx="5.800" cy="5.800" r="4.600" strokeWidth="2.200" /><path d="M9 9l4 4" strokeWidth="2.800" strokeLinecap="round" /></svg>
          </SearchButton>
        </SearchForm>
      </Controls>
      <TableWrap>
        <SurveyTable>
          <colgroup>{COLUMNS.map(([name, w]) => <Col key={name} $w={w} />)}</colgroup>
          <thead>
            <tr>{COLUMNS.map(([name]) => <HeadCell key={name} scope="col">{name}</HeadCell>)}</tr>
          </thead>
          <tbody>
            {SURVEYS.map(([name, id, status, open, close], i) => (
              <Row key={name} $hover={i === 0} $odd={i % 2 === 0}>
                <Cell as="th" scope="row">{name}</Cell>
                <Cell>{id}</Cell>
                <Cell>{status}</Cell>
                <Cell>{open}</Cell>
                <Cell>{close}</Cell>
                <Cell>@johndoe</Cell>
                <ActionCell><ActionButton aria-label={`Analyze ${name}`}><AnalyzeIcon /></ActionButton></ActionCell>
                <ActionCell><ActionButton aria-label={`Edit ${name}`}><PencilIcon /></ActionButton></ActionCell>
                <ActionCell><ActionButton aria-label={`Delete ${name}`}><TrashIcon /></ActionButton></ActionCell>
              </Row>
            ))}
          </tbody>
        </SurveyTable>
      </TableWrap>
    </Container>
  </PageView>
);

const Downloads = () => (
  <DownloadBar>
    {["Milestone2S….pdf", "Milestone4T….pdf"].map((name) => (
      <Download key={name}>
        <DownloadName><PdfIcon />{name}</DownloadName>
        <DownloadMenu aria-label={`Options for ${name}`}><Chevron /></DownloadMenu>
      </Download>
    ))}
    <ShowAll>Show all</ShowAll>
    <button aria-label="Close downloads"><CloseGlyph size={12} color="#8dbccb" /></button>
  </DownloadBar>
);

export default function App() {
  return (
    <Desktop>
      <GlobalStyle />
      <SystemBar />
      <Workspace>
        <Sidebar />
        <Browser>
          <BrowserChrome />
          <SurveyPage />
          <Downloads />
        </Browser>
      </Workspace>
    </Desktop>
  );
}
